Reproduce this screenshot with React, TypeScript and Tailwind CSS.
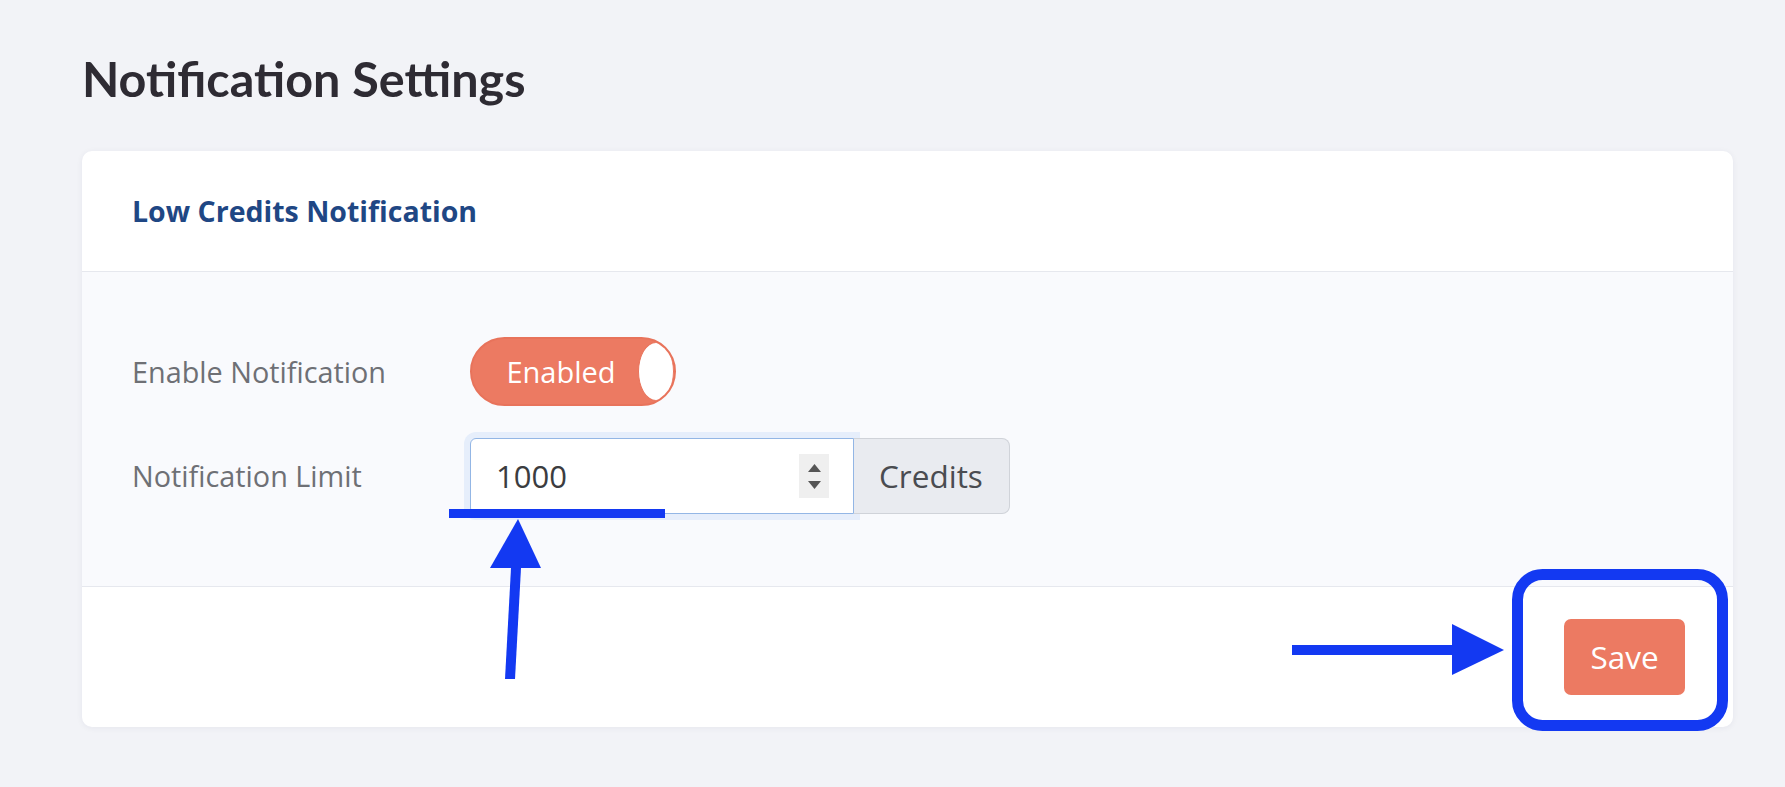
import React from "react";

const OPEN = { fontFamily: '"Open Sans", "Noto Sans", sans-serif' };
const LATO = { fontFamily: 'Lato, "Open Sans", sans-serif' };

function Spinner() {
  return (
    <div className="flex h-[44px] w-[30px] flex-col items-center justify-center gap-[9px] bg-[#efefef]">
      <svg width="13" height="8" viewBox="0 0 13 8">
        <polygon points="6.5,0 13,8 0,8" fill="#555555" />
      </svg>
      <svg width="13" height="8" viewBox="0 0 13 8">
        <polygon points="0,0 13,0 6.5,8" fill="#555555" />
      </svg>
    </div>
  );
}

function Toggle() {
  return (
    <div className="flex h-[69px] w-[206px] items-center overflow-hidden rounded-full border-2 border-[#e8735b] bg-[#ec7a62]">
      <span className="flex-1 pl-[12px] text-center text-[29px] text-white" style={OPEN}>
        Enabled
      </span>
      <div className="h-[59px] w-[36px] rounded-[50%] border border-[#e8735b] bg-white" />
    </div>
  );
}

export default function App() {
  return (
    <div className="relative h-[787px] w-[1785px] overflow-hidden bg-[#f2f3f7]">
      <div className="pl-[82px] pt-[49px]">
        <h1 className="text-[48.5px] font-bold leading-[58px] text-[#2e2b33]" style={LATO}>
          Notification Settings
        </h1>
      </div>

      <div className="ml-[82px] mt-[44px] w-[1651px] overflow-hidden rounded-[10px] bg-white shadow-[0_1px_6px_rgba(30,40,80,0.06)]">
        <div className="flex h-[121px] items-center border-b border-[#e6e8ee] px-[50px]">
          <span className="text-[28.5px] font-bold text-[#1f4784]" style={OPEN}>
            Low Credits Notification
          </span>
        </div>

        <div className="flex h-[315px] flex-col gap-[32px] border-b border-[#e6e8ee] bg-[#f9fafd] pl-[50px] pt-[65px]">
          <div className="flex items-center">
            <span className="w-[338px] text-[28.8px] text-[#6e7075]" style={OPEN}>
              Enable Notification
            </span>
            <Toggle />
          </div>
          <div className="flex items-center">
            <span className="w-[338px] text-[28.8px] text-[#6e7075]" style={OPEN}>
              Notification Limit
            </span>
            <div className="flex">
              <div className="flex h-[76px] w-[384px] items-center justify-between rounded-l-[6px] border-[1.5px] border-[#93b6e5] bg-white pl-[25px] pr-[24px] shadow-[0_0_0_6px_#e6eefb]">
                <span className="text-[31px] text-[#3b3c40]" style={OPEN}>
                  1000
                </span>
                <Spinner />
              </div>
              <div className="flex h-[76px] w-[156px] items-center rounded-r-[8px] border border-l-0 border-[#d0d3d9] bg-[#e9ebf0] pl-[25px]">
                <span className="text-[31.5px] text-[#4a4c51]" style={OPEN}>
                  Credits
                </span>
              </div>
            </div>
          </div>
        </div>

        <div className="flex h-[140px] items-center justify-end pr-[48px]">
          <button className="flex h-[76px] w-[121px] items-center justify-center rounded-[7px] bg-[#ec7a62] text-[31.5px] text-white" style={OPEN}>
            Save
          </button>
        </div>
      </div>

      <svg
        className="pointer-events-none absolute left-0 top-0"
        width="1785"
        height="787"
        viewBox="0 0 1785 787"
      >
        <rect x="449" y="509" width="216" height="9" fill="#1339f2" />
        <polygon points="518,519 541,568 490,568" fill="#1339f2" />
        <polygon points="511,568 521,568 515,679 505,679" fill="#1339f2" />
        <rect x="1292" y="645" width="162" height="10" fill="#1339f2" />
        <polygon points="1452,624 1504,650 1452,675" fill="#1339f2" />
        <rect x="1517.5" y="574.5" width="205" height="151" rx="25" fill="none" stroke="#1339f2" strokeWidth="11" />
      </svg>
    </div>
  );
}
